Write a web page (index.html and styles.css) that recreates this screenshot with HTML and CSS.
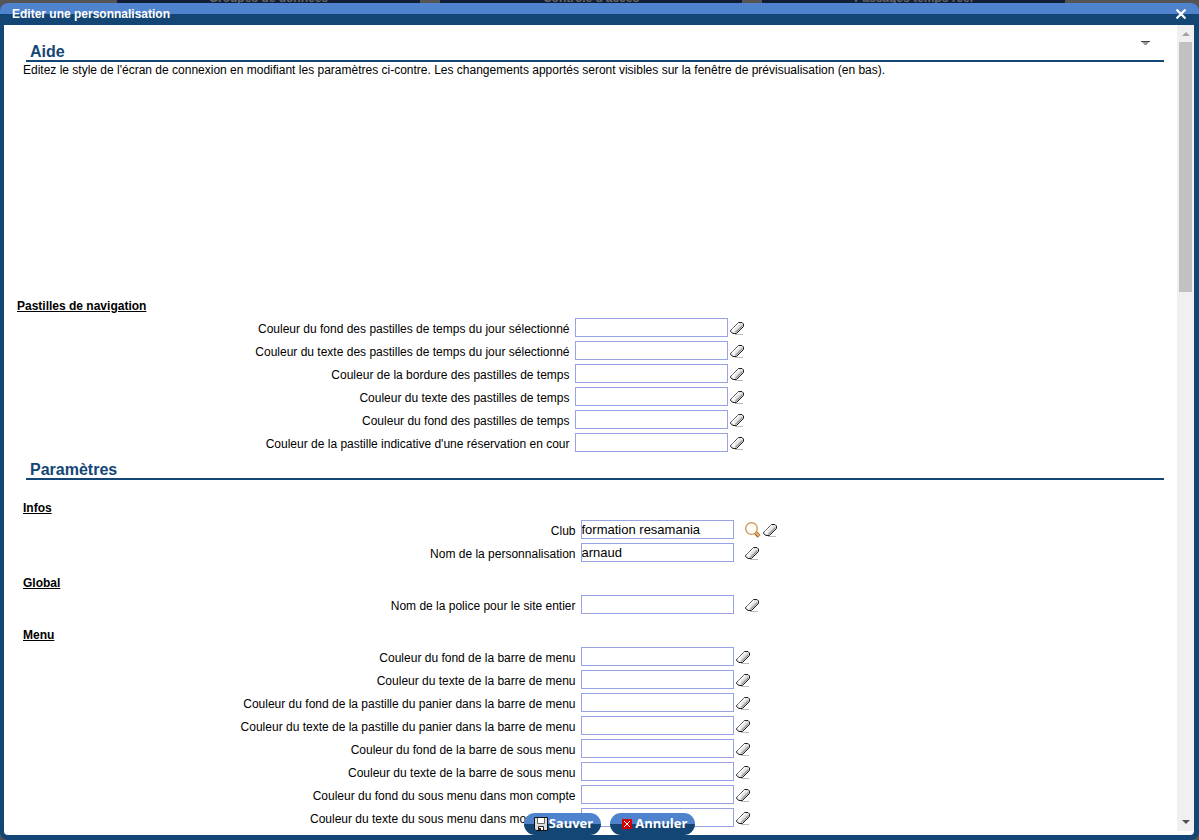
FILE: index.html
```html
<!DOCTYPE html>
<html lang="fr">
<head>
    <meta charset="utf-8">
    <title>Editer une personnalisation</title>
    <link rel="stylesheet" href="styles.css">
</head>
<body>
    <svg class="symbols" aria-hidden="true">
        <symbol id="eraser" viewBox="0 0 14 14">
            <path d="M5 13.500h8" stroke="#bbb"/>
            <path d="M.5 9.500 7.500 2.500 8.500 1.500H12L13.500 3v2.500L6.500 12.500H3L.5 10.500z" fill="#e4e4e4" stroke="#222"/>
            <path d="M5.500 11.500 12.500 4.500" stroke="#999" stroke-width="1.500"/>
            <path d="M2 9 9 2.500M3 10.500 4.500 8.500" stroke="#fff" stroke-width="1.500"/>
        </symbol>
        <symbol id="search" viewBox="0 0 16 16">
            <path d="M10.500 10.500 14 14.500" stroke="#a5642a" stroke-width="4"/>
            <path d="M10.500 10.500 14 14" stroke="#e8b070" stroke-width="2"/>
            <circle cx="6.500" cy="6.500" r="5.800" fill="#fffdf8" stroke="#cf9352" stroke-width="1.300"/>
        </symbol>
    </svg>

    <div class="tabs">
        <span class="tab">Groupes de données</span>
        <span class="tab">Contrôle d'accès</span>
        <span class="tab">Passages temps réel</span>
    </div>

    <div class="window">
        <div class="titlebar">
            <span>Editer une personnalisation</span>
            <button type="button" class="close" aria-label="Fermer">
                <svg width="10" height="10" viewBox="0 0 10 10"><path d="M.5.5l9 9M9.500.5l-9 9" stroke="#fff" stroke-width="2.200"/></svg>
            </button>
        </div>

        <div class="window-body">
            <form class="content" id="persoForm">
                <div class="help">
                    <h2>
                        Aide
                        <svg class="toggle" width="9" height="4" viewBox="0 0 9 4"><path d="M1 1h7L5.500 4h-2z" fill="#999"/><path d="M0 .5h9" stroke="#444"/></svg>
                    </h2>
                    <p>Editez le style de l'écran de connexion en modifiant les paramètres ci-contre. Les changements apportés seront visibles sur la fenêtre de prévisualisation (en bas).</p>
                </div>

                <div class="group">
                    <h3>Pastilles de navigation</h3>
                    <div class="row">
                        <label for="fondJour">Couleur du fond des pastilles de temps du jour sélectionné</label>
                        <input type="text" id="fondJour">
                        <button type="button" class="icon" aria-label="Effacer"><svg><use href="#eraser"/></svg></button>
                    </div>
                    <div class="row">
                        <label for="texteJour">Couleur du texte des pastilles de temps du jour sélectionné</label>
                        <input type="text" id="texteJour">
                        <button type="button" class="icon" aria-label="Effacer"><svg><use href="#eraser"/></svg></button>
                    </div>
                    <div class="row">
                        <label for="bordureTemps">Couleur de la bordure des pastilles de temps</label>
                        <input type="text" id="bordureTemps">
                        <button type="button" class="icon" aria-label="Effacer"><svg><use href="#eraser"/></svg></button>
                    </div>
                    <div class="row">
                        <label for="texteTemps">Couleur du texte des pastilles de temps</label>
                        <input type="text" id="texteTemps">
                        <button type="button" class="icon" aria-label="Effacer"><svg><use href="#eraser"/></svg></button>
                    </div>
                    <div class="row">
                        <label for="fondTemps">Couleur du fond des pastilles de temps</label>
                        <input type="text" id="fondTemps">
                        <button type="button" class="icon" aria-label="Effacer"><svg><use href="#eraser"/></svg></button>
                    </div>
                    <div class="row">
                        <label for="resaEnCours">Couleur de la pastille indicative d'une réservation en cour</label>
                        <input type="text" id="resaEnCours">
                        <button type="button" class="icon" aria-label="Effacer"><svg><use href="#eraser"/></svg></button>
                    </div>
                </div>

                <h2>Paramètres</h2>

                <div class="group params">
                    <h3>Infos</h3>
                    <div class="row spaced">
                        <label for="club">Club</label>
                        <input type="text" id="club" value="formation resamania">
                        <button type="button" class="icon search" aria-label="Rechercher"><svg><use href="#search"/></svg></button>
                        <button type="button" class="icon" aria-label="Effacer"><svg><use href="#eraser"/></svg></button>
                    </div>
                    <div class="row spaced">
                        <label for="nom">Nom de la personnalisation</label>
                        <input type="text" id="nom" value="arnaud">
                        <button type="button" class="icon" aria-label="Effacer"><svg><use href="#eraser"/></svg></button>
                    </div>

                    <h3>Global</h3>
                    <div class="row spaced">
                        <label for="police">Nom de la police pour le site entier</label>
                        <input type="text" id="police">
                        <button type="button" class="icon" aria-label="Effacer"><svg><use href="#eraser"/></svg></button>
                    </div>

                    <h3>Menu</h3>
                    <div class="row">
                        <label for="fondMenu">Couleur du fond de la barre de menu</label>
                        <input type="text" id="fondMenu">
                        <button type="button" class="icon" aria-label="Effacer"><svg><use href="#eraser"/></svg></button>
                    </div>
                    <div class="row">
                        <label for="texteMenu">Couleur du texte de la barre de menu</label>
                        <input type="text" id="texteMenu">
                        <button type="button" class="icon" aria-label="Effacer"><svg><use href="#eraser"/></svg></button>
                    </div>
                    <div class="row">
                        <label for="fondPanier">Couleur du fond de la pastille du panier dans la barre de menu</label>
                        <input type="text" id="fondPanier">
                        <button type="button" class="icon" aria-label="Effacer"><svg><use href="#eraser"/></svg></button>
                    </div>
                    <div class="row">
                        <label for="textePanier">Couleur du texte de la pastille du panier dans la barre de menu</label>
                        <input type="text" id="textePanier">
                        <button type="button" class="icon" aria-label="Effacer"><svg><use href="#eraser"/></svg></button>
                    </div>
                    <div class="row">
                        <label for="fondSousMenu">Couleur du fond de la barre de sous menu</label>
                        <input type="text" id="fondSousMenu">
                        <button type="button" class="icon" aria-label="Effacer"><svg><use href="#eraser"/></svg></button>
                    </div>
                    <div class="row">
                        <label for="texteSousMenu">Couleur du texte de la barre de sous menu</label>
                        <input type="text" id="texteSousMenu">
                        <button type="button" class="icon" aria-label="Effacer"><svg><use href="#eraser"/></svg></button>
                    </div>
                    <div class="row">
                        <label for="fondCompte">Couleur du fond du sous menu dans mon compte</label>
                        <input type="text" id="fondCompte">
                        <button type="button" class="icon" aria-label="Effacer"><svg><use href="#eraser"/></svg></button>
                    </div>
                    <div class="row">
                        <label for="texteCompte">Couleur du texte du sous menu dans mon compte</label>
                        <input type="text" id="texteCompte">
                        <button type="button" class="icon" aria-label="Effacer"><svg><use href="#eraser"/></svg></button>
                    </div>
                </div>
            </form>

            <div class="scrollbar" aria-hidden="true">
                <span class="arrow up"></span>
                <span class="thumb"></span>
                <span class="arrow down"></span>
            </div>
        </div>

        <div class="actions">
            <button type="submit" form="persoForm">
                <svg width="14" height="14" viewBox="0 0 14 14">
                    <path d="M.5.5h13v13H2L.5 12z" fill="#ddd" stroke="#111"/>
                    <path d="M3.500 1v5.500h7V1" fill="#fff" stroke="#666"/>
                    <path d="M4.500 13V9.500h5V13" fill="#fff" stroke="#222"/>
                    <path d="M5 11h2v2H5z" fill="#222"/>
                </svg>
                <span>Sauver</span>
            </button>
            <button type="button">
                <svg width="14" height="14" viewBox="0 0 14 14">
                    <path d="M2 2h10v10H2z" fill="#d40000"/>
                    <path d="M4 4l6 6M10 4l-6 6" stroke="#fff"/>
                </svg>
                <span>Annuler</span>
            </button>
        </div>
    </div>
</body>
</html>
```
FILE: styles.css
```css
:root {
    --blue-dark: #144675;
    --blue-light: #4f83ce;
    --input-border: #98a3e6;
}

* {
    box-sizing: border-box;
}

body {
    margin: 0;
    height: 100vh;
    display: flex;
    flex-direction: column;
    overflow: hidden;
    background: #555;
    font-family: "Liberation Sans", Arial, sans-serif;
    font-size: 12px;
    color: #000;
}

button {
    font: inherit;
    padding: 0;
    border: none;
    background: none;
    cursor: pointer;
}

svg {
    display: block;
}

.symbols {
    position: absolute;
    width: 0;
    height: 0;
}

/* page under the window */
.tabs {
    height: 3px;
    padding: 0 134px 0 117px;
    display: flex;
    align-items: flex-end;
    gap: 20px;
    overflow: hidden;
}

.tab {
    flex: 1;
    height: 13px;
    background: #101f35;
    color: #666;
    font-size: 12px;
    font-weight: bold;
    line-height: 16px;
    text-align: center;
}

.window {
    position: relative;
    flex: 1;
    min-height: 0;
    display: flex;
    flex-direction: column;
    padding: 0 5px 5px 4px;
    background: var(--blue-dark);
    border-radius: 8px;
    overflow: hidden;
}

.titlebar {
    flex: none;
    height: 22px;
    margin: 0 -5px 0 -4px;
    padding: 0 13px 0 12px;
    display: flex;
    align-items: center;
    justify-content: space-between;
    background: linear-gradient(var(--blue-light) 50%, var(--blue-dark) 50%);
    color: #fff;
    font-weight: bold;
}

.window-body {
    flex: 1;
    min-height: 0;
    display: flex;
    background: #fff;
    border-radius: 0 0 4px 4px;
    overflow: hidden;
}

.content {
    flex: 1;
    padding: 11px 13px 0;
    overflow: hidden;
}

h2 {
    display: flex;
    justify-content: space-between;
    margin: 0 0 0 9px;
    padding: 5px 4px 0;
    height: 26px;
    border-bottom: 2px solid var(--blue-dark);
    color: var(--blue-dark);
    font-size: 16px;
    line-height: 21px;
}

.toggle {
    margin-right: 10px;
}

h3 {
    margin: 0;
    font-size: 12px;
    line-height: 19px;
    text-decoration: underline;
}

.help {
    min-height: 261px;
}

.help p {
    margin: 0 6px;
    line-height: 16px;
}

.params {
    margin: 19px -6px 0 6px;
}

.params .row + h3 {
    margin-top: 10px;
}

.row {
    display: flex;
    align-items: center;
    height: 23px;
}

.row label {
    width: calc(50% - 21px);
    margin-right: 5px;
    padding-top: 2px;
    text-align: right;
    white-space: nowrap;
}

.row input {
    width: 153px;
    height: 19px;
    margin-right: 2px;
    padding: 0;
    border: 1px solid var(--input-border);
    background: #fff;
    font-family: inherit;
    font-size: 13px;
}

.spaced input {
    margin-right: 11px;
}

.icon svg {
    width: 14px;
    height: 14px;
}

.icon.search {
    margin-right: 2px;
}

.search svg {
    width: 16px;
    height: 16px;
}

.scrollbar {
    flex: none;
    width: 17px;
    margin-bottom: 4px;
    display: flex;
    flex-direction: column;
    align-items: center;
    background: #f0f0f0;
}

.thumb {
    width: 13px;
    height: 31%;
    margin: 6px 0 auto;
    background: #c1c1c1;
}

.arrow {
    border: 4px solid transparent;
}

.up {
    margin-top: 3px;
    border-bottom-color: #a3a3a3;
}

.down {
    margin-bottom: 3px;
    border-top-color: #505050;
}

/* buttons over the bottom of the form */
.actions {
    position: absolute;
    bottom: 5px;
    left: 20px;
    right: 0;
    display: flex;
    justify-content: center;
    gap: 9px;
    pointer-events: none;
}

.actions button {
    display: flex;
    align-items: center;
    gap: 1px;
    height: 22px;
    padding: 0 8px 0 10px;
    border-radius: 11px;
    background: linear-gradient(var(--blue-light) 50%, var(--blue-dark) 50%);
    color: #fff;
    font-family: "Open Sans", "Noto Sans", sans-serif;
    font-size: 13px;
    font-weight: bold;
    pointer-events: auto;
}

.actions span {
    padding-bottom: 2px;
}
```
